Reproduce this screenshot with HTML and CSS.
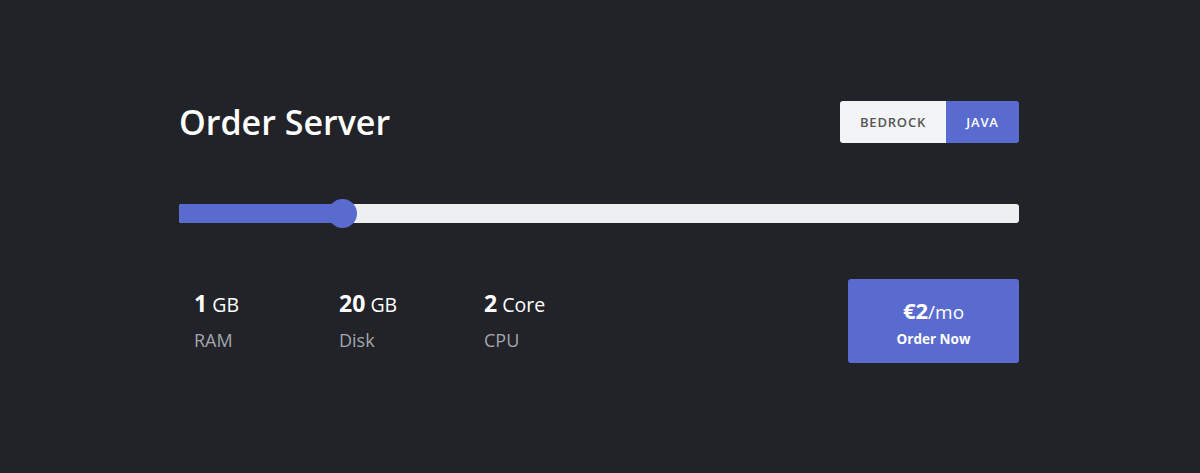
FILE: index.html
```html
<!DOCTYPE html>
<html>
<head>
<meta charset="utf-8">
<link rel="stylesheet" href="styles.css">
</head>
<body>
<div class="page">
  <div class="card">
    <div class="header">
      <h1 class="title">Order Server</h1>
      <div class="toggle">
        <button class="tab">BEDROCK</button>
        <button class="tab active">JAVA</button>
      </div>
    </div>
    <div class="slider">
      <div class="fill" style="width: 163px"></div>
      <div class="thumb" style="left: 149px"></div>
    </div>
    <div class="bottom">
      <div class="specs">
        <div class="spec">
          <div class="value"><b>1</b> GB</div>
          <div class="label">RAM</div>
        </div>
        <div class="spec">
          <div class="value"><b>20</b> GB</div>
          <div class="label">Disk</div>
        </div>
        <div class="spec">
          <div class="value"><b>2</b> Core</div>
          <div class="label">CPU</div>
        </div>
      </div>
      <button class="order">
        <span class="price"><b>€2</b>/mo</span>
        <span class="cta">Order Now</span>
      </button>
    </div>
  </div>
</div>
</body>
</html>
```

FILE: styles.css
```css
html, body {
  margin: 0;
  padding: 0;
  background: #212328;
  font-family: "Open Sans", "Noto Sans", sans-serif;
  color: #ffffff;
}
.page {
  height: 473px;
  padding-left: 179px;
}
.card {
  width: 840px;
  padding-top: 101px;
}
.header {
  display: flex;
  justify-content: space-between;
  align-items: center;
  height: 42px;
}
.title {
  margin: 0;
  font-size: 34px;
  font-weight: 600;
  line-height: 42px;
  letter-spacing: 0;
}
.toggle {
  display: flex;
  height: 42px;
  border-radius: 3px;
  overflow: hidden;
}
.tab {
  border: 0;
  margin: 0;
  font-family: inherit;
  font-size: 13px;
  font-weight: 600;
  letter-spacing: 0.8px;
  background: #f3f4f6;
  color: #555555;
  padding: 0 20px;
  height: 42px;
  width: 106px;
}
.tab.active {
  background: #5a6bcf;
  color: #ffffff;
  width: 73px;
}
.slider {
  position: relative;
  margin-top: 61px;
  height: 19px;
  background: #eeeff1;
  border-radius: 3px;
}
.fill {
  height: 100%;
  background: #5a6bcf;
  border-radius: 3px 0 0 3px;
}
.thumb {
  position: absolute;
  top: -5px;
  width: 29px;
  height: 29px;
  border-radius: 50%;
  background: #5a6bcf;
}
.bottom {
  display: flex;
  justify-content: space-between;
  margin-top: 56px;
}
.specs {
  display: flex;
  padding-left: 15px;
  padding-top: 10px;
}
.spec {
  width: 145px;
}
.value {
  font-size: 19.5px;
  line-height: 28px;
  color: #ffffff;
}
.value b {
  font-size: 23px;
  font-weight: 700;
}
.label {
  font-size: 18px;
  line-height: 24px;
  margin-top: 9px;
  color: #a3a6ad;
}
.order {
  width: 171px;
  height: 84px;
  border: 0;
  border-radius: 3px;
  background: #5a6bcf;
  color: #ffffff;
  font-family: inherit;
  display: flex;
  flex-direction: column;
  align-items: center;
  justify-content: center;
  padding: 0;
}
.price {
  font-size: 19px;
  line-height: 26px;
  margin-top: 2px;
}
.price b {
  font-size: 22px;
  font-weight: 700;
}
.cta {
  font-size: 13.5px;
  font-weight: 700;
  line-height: 18px;
  margin-top: 5px;
}
```
